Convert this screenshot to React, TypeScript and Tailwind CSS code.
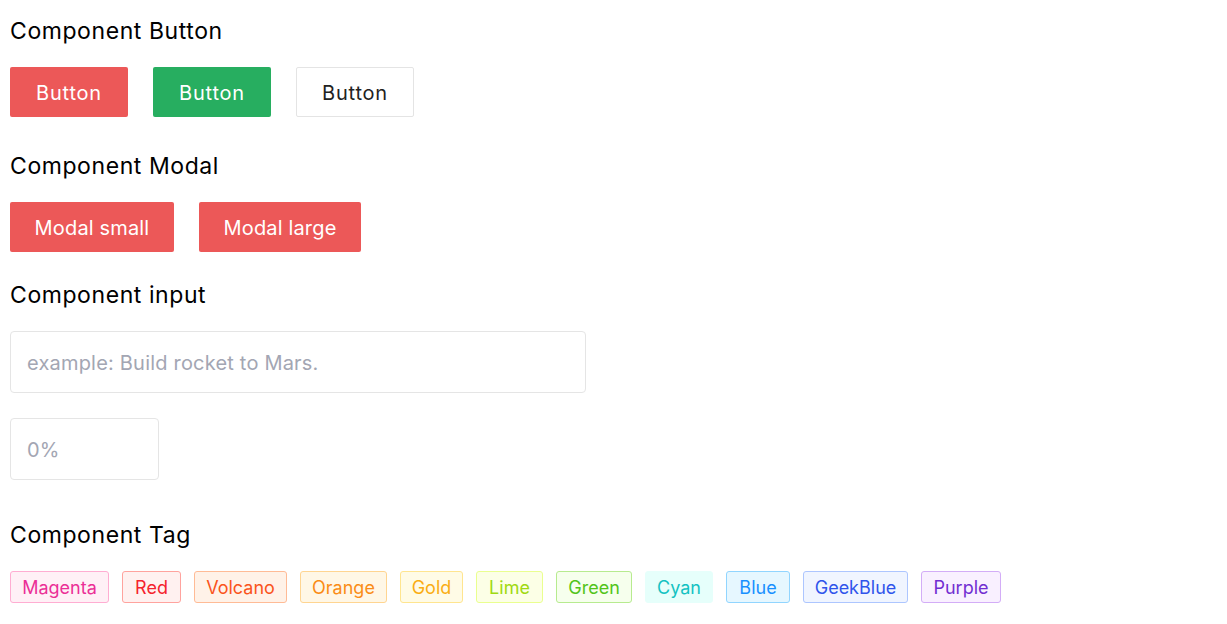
import React from 'react';

const TAGS = [
  { name: 'Magenta', w: 'w-[99px]', cls: 'text-[#eb2f96] bg-[#fff0f6] border-[#ffadd2]' },
  { name: 'Red', w: 'w-[59px]', cls: 'text-[#f5222d] bg-[#fff1f0] border-[#ffa39e]' },
  { name: 'Volcano', w: 'w-[93px]', cls: 'text-[#fa541c] bg-[#fff2e8] border-[#ffbb96]' },
  { name: 'Orange', w: 'w-[87px]', cls: 'text-[#fa8c16] bg-[#fff7e6] border-[#ffd591]' },
  { name: 'Gold', w: 'w-[63px]', cls: 'text-[#faad14] bg-[#fffbe6] border-[#ffe58f]' },
  { name: 'Lime', w: 'w-[67px]', cls: 'text-[#a0d911] bg-[#fcffe6] border-[#eaff8f]' },
  { name: 'Green', w: 'w-[76px]', cls: 'text-[#52c41a] bg-[#f6ffed] border-[#b7eb8f]' },
  { name: 'Cyan', w: 'w-[68px]', cls: 'text-[#13c2c2] bg-[#e6fffb] border-[#e6fffb]' },
  { name: 'Blue', w: 'w-[64px]', cls: 'text-[#1890ff] bg-[#e6f7ff] border-[#91d5ff]' },
  { name: 'GeekBlue', w: 'w-[105px]', cls: 'text-[#2f54eb] bg-[#f0f5ff] border-[#adc6ff]' },
  { name: 'Purple', w: 'w-[80px]', cls: 'text-[#722ed1] bg-[#f9f0ff] border-[#d3adf7]' },
];

const Heading: React.FC<{ children: React.ReactNode; className?: string }> = ({ children, className = '' }) => (
  <h2 className={`text-[23px] leading-[24px] tracking-[0.025em] text-black font-normal mb-[24px] ${className}`}>{children}</h2>
);

const App: React.FC = () => {
  return (
    <div className="min-h-screen bg-white px-[10px] pt-[19px] font-['Inter','Noto_Sans',sans-serif]">
      <Heading>Component Button</Heading>
      <div className="flex gap-[25px] tracking-[0.05em]">
        <button className="w-[118px] h-[50px] pt-px rounded-[2px] bg-[#ec5858] text-white text-[20px]">Button</button>
        <button className="w-[118px] h-[50px] pt-px rounded-[2px] bg-[#27ae60] text-white text-[20px]">Button</button>
        <button className="w-[118px] h-[50px] pt-px rounded-[2px] bg-white border border-[#e4e4e4] text-[#222] text-[20px]">Button</button>
      </div>

      <Heading className="mt-[37px]">Component Modal</Heading>
      <div className="flex gap-[25px] tracking-[0.01em]">
        <button className="w-[164px] h-[50px] pt-px rounded-[2px] bg-[#ec5858] text-white text-[20px]">Modal small</button>
        <button className="w-[162px] h-[50px] pt-px rounded-[2px] bg-[#ec5858] text-white text-[20px]">Modal large</button>
      </div>

      <Heading className="mt-[31px]">Component input</Heading>
      <input
        placeholder="example: Build rocket to Mars."
        className="block w-[576px] h-[62px] rounded-[4px] border border-[#e5e5e5] px-[16px] pt-px text-[20px] tracking-[0.01em] text-[#222] placeholder:text-[#a3a6b3] outline-none"
      />
      <input
        placeholder="0%"
        className="block mt-[25px] w-[149px] h-[62px] rounded-[4px] border border-[#e5e5e5] px-[16px] pt-px text-[20px] tracking-[0.01em] text-[#222] placeholder:text-[#a3a6b3] outline-none"
      />

      <Heading className="mt-[43px]">Component Tag</Heading>
      <div className="flex gap-[13px]">
        {TAGS.map((t) => (
          <span
            key={t.name}
            className={`${t.w} h-[32px] flex items-center justify-center rounded-[3px] border text-[18px] ${t.cls}`}
          >
            {t.name}
          </span>
        ))}
      </div>
    </div>
  );
};

export default App;
